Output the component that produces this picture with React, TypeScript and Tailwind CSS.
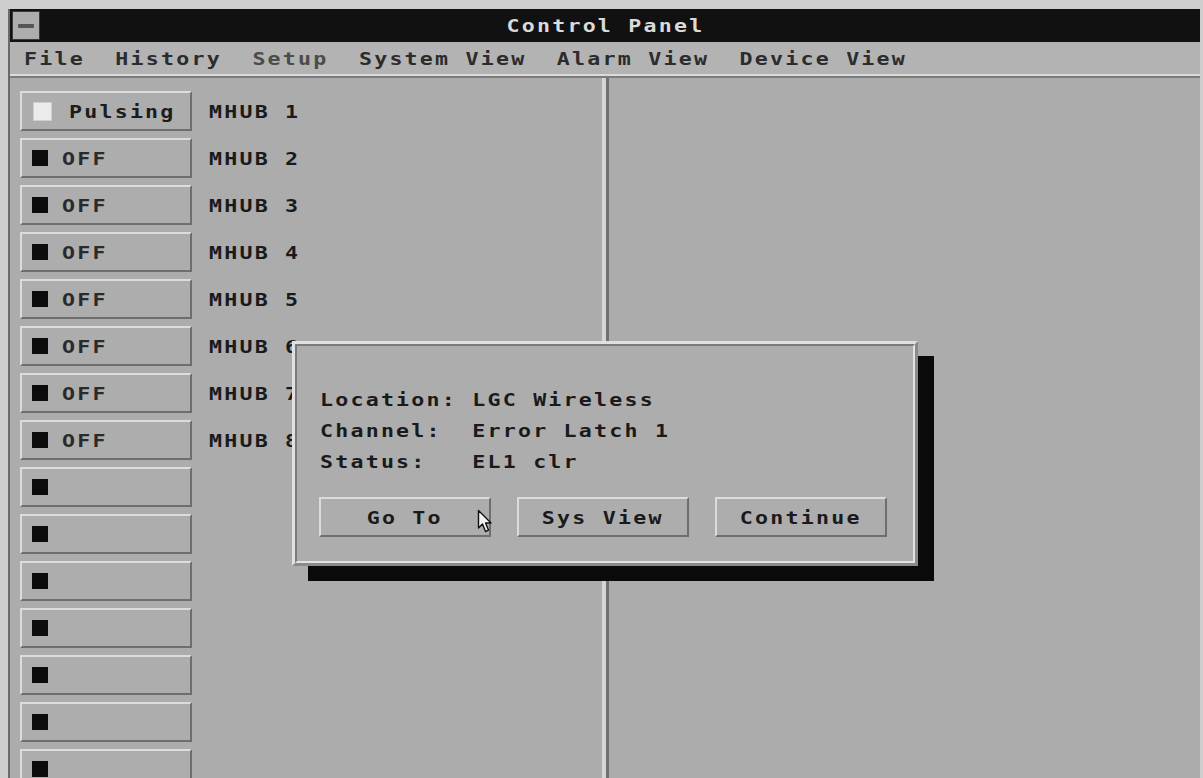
import React from 'react';

type Hub = { state: 'pulsing' | 'off' | 'blank'; label?: string };

const hubs: Hub[] = [
  { state: 'pulsing', label: 'MHUB 1' },
  { state: 'off', label: 'MHUB 2' },
  { state: 'off', label: 'MHUB 3' },
  { state: 'off', label: 'MHUB 4' },
  { state: 'off', label: 'MHUB 5' },
  { state: 'off', label: 'MHUB 6' },
  { state: 'off', label: 'MHUB 7' },
  { state: 'off', label: 'MHUB 8' },
  { state: 'blank' },
  { state: 'blank' },
  { state: 'blank' },
  { state: 'blank' },
  { state: 'blank' },
  { state: 'blank' },
  { state: 'blank' },
];

// the terminal font is wide: glyphs get stretched horizontally, 15.2px per cell
const mono = "font-['DejaVu_Sans_Mono','Liberation_Mono',monospace] font-bold text-[18px] tracking-[1.85px]";

function Wide({ children, center = false }: { children: React.ReactNode; center?: boolean }) {
  return (
    <span className={`inline-block whitespace-pre scale-x-[1.2] ${center ? 'origin-center' : 'origin-left'}`}>
      {children}
    </span>
  );
}

function HubButton({ hub }: { hub: Hub }) {
  return (
    <div className="flex items-center gap-[17px] shrink-0">
      <div className="w-[172px] h-[40px] flex items-center bg-[#adadad] border-2 border-t-[#dcdcdc] border-l-[#dcdcdc] border-b-[#6e6e6e] border-r-[#6e6e6e]">
        {hub.state === 'pulsing' ? (
          <>
            <span className="ml-[11px] w-[19px] h-[19px] bg-[#ececec] border border-[#cfcfcf]" />
            <span className="ml-[17px] text-[#1c1c1c]"><Wide>Pulsing</Wide></span>
          </>
        ) : (
          <>
            <span className="ml-[10px] w-[16px] h-[16px] bg-[#0c0c0c]" />
            {hub.state === 'off' && <span className="ml-[14px] text-[#2a2a2a]"><Wide>OFF</Wide></span>}
          </>
        )}
      </div>
      {hub.label && <span className="text-[#1a1a1a]"><Wide>{hub.label}</Wide></span>}
    </div>
  );
}

function DialogButton({ children }: { children: React.ReactNode }) {
  return (
    <div className="w-[172px] h-[40px] flex items-center justify-center bg-[#adadad] border-2 border-t-[#dcdcdc] border-l-[#dcdcdc] border-b-[#6e6e6e] border-r-[#6e6e6e] text-[#1a1a1a]">
      <Wide center>{children}</Wide>
    </div>
  );
}

function Cursor() {
  return (
    <svg width="16" height="26" viewBox="0 0 16 26" className="absolute left-[477px] top-[509px]">
      <path d="M1.5 1.5 L1.5 19 L5.5 15 L8.5 22.5 L11.5 21.2 L8.6 14 L14 14 Z" fill="#f2f2f2" stroke="#111" strokeWidth="1.4" strokeLinejoin="round" />
    </svg>
  );
}

export default function App() {
  return (
    <div className={`relative w-[1203px] h-[778px] overflow-hidden bg-[#cdcdcd] pl-[8px] pt-[9px] pr-[3px] ${mono}`}>
      <div className="h-full flex flex-col border-l-2 border-[#6a6a6a] bg-[#acacac]">
        {/* title bar */}
        <div className="h-[33px] shrink-0 grid grid-cols-[30px_1fr_30px] bg-[#111111]">
          <div className="m-[2px] mr-0 bg-[#adadad] border border-[#3a3a3a] flex items-center justify-center">
            <span className="w-[16px] h-[4px] bg-[#555] rounded-[1px]" />
          </div>
          <div className="flex items-center justify-center text-[#dadada]">
            <Wide center>Control Panel</Wide>
          </div>
          <div />
        </div>

        {/* menu bar */}
        <div className="h-[32px] shrink-0 flex items-center pl-[14px] bg-[#b3b3b3] text-[#2c2c2c]">
          <Wide>
            <span>File  History  </span>
            <span className="text-[#4c4c4c]">Setup  </span>
            <span>System View  Alarm View  Device View</span>
          </Wide>
        </div>
        <div className="h-[2px] shrink-0 bg-[#dadada]" />
        <div className="h-[2px] shrink-0 bg-[#7c7c7c]" />

        {/* panels */}
        <div className="flex-1 flex min-h-0">
          <div className="w-[592px] shrink-0 flex flex-col gap-[7px] pl-[10px] pt-[13px]">
            {hubs.map((hub, i) => (
              <HubButton key={i} hub={hub} />
            ))}
          </div>
          <div className="w-[4px] shrink-0 bg-[#d6d6d6]" />
          <div className="w-[3px] shrink-0 bg-[#707070]" />
          <div className="flex-1" />
        </div>
      </div>

      {/* alarm popup */}
      <div className="absolute left-[292px] top-[341px] w-[626px] h-[225px] bg-[#adadad] shadow-[16px_15px_0_0_#0a0a0a] border-[3px] border-t-[#e0e0e0] border-l-[#e0e0e0] border-b-[#8a8a8a] border-r-[#8a8a8a]">
        <div className="h-full border-2 border-t-[#7a7a7a] border-l-[#7a7a7a] border-b-[#e2e2e2] border-r-[#e2e2e2] pl-[23px] pt-[38px]">
          <div className="leading-[31px] text-[#1a1a1a] whitespace-pre origin-left scale-x-[1.2]">
            <div>Location: LGC Wireless</div>
            <div>Channel:  Error Latch 1</div>
            <div>Status:   EL1 clr</div>
          </div>
          <div className="mt-[20px] flex gap-[26px] -ml-[1px]">
            <DialogButton>Go To</DialogButton>
            <DialogButton>Sys View</DialogButton>
            <DialogButton>Continue</DialogButton>
          </div>
        </div>
      </div>

      <Cursor />
    </div>
  );
}
